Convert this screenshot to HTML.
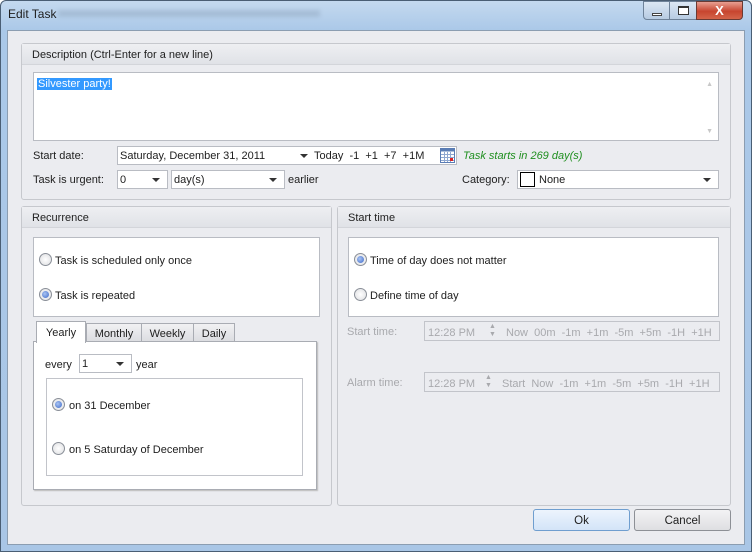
<!DOCTYPE html>
<html><head><meta charset="utf-8"><style>
*{box-sizing:border-box;margin:0;padding:0}
body{width:752px;height:552px;overflow:hidden;background:#fff;font-family:"Liberation Sans",sans-serif;font-size:11px;color:#1e1e1e;position:relative}
.a{position:absolute}
.win{left:0;top:0;width:752px;height:552px;background:linear-gradient(#c4d9ef,#aac8e8 30px,#a9c6e6);border:1px solid #4a5e74;border-radius:6px 6px 0 0}
.client{left:7px;top:30px;width:738px;height:515px;background:#ebecf0;border:1px solid #8b9db1}
.grp{border:1px solid #c6c8cd;border-radius:3px;background:#ebecf0}
.gh{position:absolute;left:0;top:0;right:0;height:21px;background:linear-gradient(#eeeff2,#e0e2e7);border-bottom:1px solid #d3d5da;padding:5px 0 0 10px}
.box{background:#fff;border:1px solid #b9bcc3}
.combo{background:#fff;border:1px solid #b9bcc3;padding:3px 0 0 2px}
.arr{position:absolute;right:7px;top:7px;width:0;height:0;border-left:4px solid transparent;border-right:4px solid transparent;border-top:4px solid #333}
.radio{position:absolute;width:13px;height:13px;border-radius:50%;border:1px solid #8a8f98;background:radial-gradient(#fff,#dcdde0)}
.radio.on::after{content:"";position:absolute;left:2px;top:2px;width:7px;height:7px;border-radius:50%;background:radial-gradient(circle at 40% 40%,#a9c4f3,#3c68c8)}
.dis{color:#a8a9ad}
.tab{position:absolute;top:323px;height:19px;border:1px solid #a9acb3;background:linear-gradient(#f1f1f3,#dcdde1);text-align:center;padding-top:4px}
.btn{border:1px solid #8d9096;border-radius:3px;text-align:center;padding-top:5px;font-size:11.5px}
</style></head><body>
<div class="a win"></div>
<div class="a" style="left:8px;top:7px;font-size:12px">Edit Task</div>
<div class="a" style="left:58px;top:10px;width:262px;height:7px;background:#8ea4bc;opacity:.45;filter:blur(2px)"></div>
<div class="a" style="left:643px;top:1px;width:27px;height:19px;border:1px solid #6e8299;border-radius:0 0 0 4px;background:linear-gradient(#dbe7f4,#b7cbe2)"><div class="a" style="left:8px;top:11px;width:10px;height:3px;border:1px solid #444;background:#fff"></div></div>
<div class="a" style="left:669px;top:1px;width:28px;height:19px;border:1px solid #6e8299;background:linear-gradient(#dbe7f4,#b7cbe2)"><div class="a" style="left:8px;top:4px;width:11px;height:9px;border:1px solid #333;border-top-width:2px;background:#fff"></div></div>
<div class="a" style="left:696px;top:1px;width:47px;height:19px;border:1px solid #6a3a33;border-radius:0 0 4px 0;background:linear-gradient(#e8a092,#c7452f 55%,#d4644a);color:#fff;font-weight:bold;font-size:13px;text-align:center;line-height:17px">X</div>
<div class="a client"></div>

<div class="a grp" style="left:21px;top:43px;width:710px;height:157px"><div class="gh">Description (Ctrl-Enter for a new line)</div></div>
<div class="a box" style="left:33px;top:72px;width:686px;height:69px"><span class="a" style="left:3px;top:5px;background:#3399ff;color:#fff;padding:0 1px">Silvester party!</span><span class="a" style="right:5px;top:8px;color:#c8c8c8;font-size:7px">▲</span><span class="a" style="right:5px;bottom:5px;color:#c8c8c8;font-size:7px">▼</span></div>
<div class="a" style="left:33px;top:150px">Start date:</div>
<div class="a combo" style="left:117px;top:146px;width:340px;height:19px">Saturday, December 31, 2011<div class="arr" style="left:182px;right:auto"></div>
<span class="a" style="left:196px;top:3px">Today&nbsp; -1&nbsp; +1&nbsp; +7&nbsp; +1M</span>
<svg class="a" style="left:322px;top:1px" width="15" height="15"><rect x=".5" y=".5" width="14" height="14" fill="#fff" stroke="#5a7db5"/><rect x=".5" y=".5" width="14" height="3" fill="#5a7db5"/><g stroke="#8fa8d0"><path d="M1 6.5h13M1 9.5h13M1 12.5h13M4.5 4v10M7.5 4v10M10.5 4v10"/></g><rect x="10" y="10" width="3" height="3" fill="#d22"/></svg></div>
<div class="a" style="left:463px;top:150px;color:#1f8f1f;font-style:italic">Task starts in 269 day(s)</div>
<div class="a" style="left:33px;top:174px">Task is urgent:</div>
<div class="a combo" style="left:117px;top:170px;width:51px;height:19px">0<div class="arr"></div></div>
<div class="a combo" style="left:171px;top:170px;width:114px;height:19px">day(s)<div class="arr"></div></div>
<div class="a" style="left:288px;top:174px">earlier</div>
<div class="a" style="left:462px;top:174px">Category:</div>
<div class="a combo" style="left:517px;top:170px;width:202px;height:19px"><div class="a" style="left:2px;top:1px;width:15px;height:15px;border:1px solid #000"></div><span class="a" style="left:21px;top:3px">None</span><div class="arr"></div></div>

<div class="a grp" style="left:21px;top:206px;width:311px;height:300px"><div class="gh">Recurrence</div></div>
<div class="a box" style="left:33px;top:237px;width:287px;height:80px"></div>
<div class="radio" style="left:39px;top:253px"></div><div class="a" style="left:55px;top:255px">Task is scheduled only once</div>
<div class="radio on" style="left:39px;top:288px"></div><div class="a" style="left:55px;top:290px">Task is repeated</div>
<div class="tab" style="left:86px;width:56px">Monthly</div>
<div class="tab" style="left:141px;width:53px">Weekly</div>
<div class="tab" style="left:193px;width:42px">Daily</div>
<div class="a box" style="left:33px;top:341px;width:284px;height:149px;border-color:#a9acb3;box-shadow:1px 1px 1px #bbb"></div>
<div class="a" style="left:36px;top:321px;width:50px;height:22px;background:#fff;border:1px solid #a9acb3;border-bottom:none;text-align:center;padding-top:5px">Yearly</div>
<div class="a" style="left:45px;top:359px">every</div>
<div class="a combo" style="left:79px;top:354px;width:53px;height:19px">1<div class="arr"></div></div>
<div class="a" style="left:136px;top:359px">year</div>
<div class="a box" style="left:46px;top:378px;width:257px;height:98px;border-color:#c2c4ca"></div>
<div class="radio on" style="left:52px;top:398px"></div><div class="a" style="left:69px;top:400px">on 31 December</div>
<div class="radio" style="left:52px;top:442px"></div><div class="a" style="left:69px;top:444px">on 5 Saturday of December</div>

<div class="a grp" style="left:337px;top:206px;width:394px;height:300px"><div class="gh">Start time</div></div>
<div class="a box" style="left:348px;top:237px;width:371px;height:80px"></div>
<div class="radio on" style="left:354px;top:253px"></div><div class="a" style="left:370px;top:255px">Time of day does not matter</div>
<div class="radio" style="left:354px;top:288px"></div><div class="a" style="left:370px;top:290px">Define time of day</div>
<div class="a dis" style="left:347px;top:326px">Start time:</div>
<div class="a dis" style="left:424px;top:321px;width:296px;height:20px;border:1px solid #c2c4ca;padding:5px 0 0 3px">12:28 PM<span class="a" style="left:64px;top:1px;font-size:7px;line-height:8px">▲<br>▼</span><span class="a" style="left:81px;top:5px">Now&nbsp; 00m&nbsp; -1m&nbsp; +1m&nbsp; -5m&nbsp; +5m&nbsp; -1H&nbsp; +1H</span></div>
<div class="a dis" style="left:347px;top:377px">Alarm time:</div>
<div class="a dis" style="left:424px;top:372px;width:296px;height:20px;border:1px solid #c2c4ca;padding:5px 0 0 3px">12:28 PM<span class="a" style="left:60px;top:1px;font-size:7px;line-height:8px">▲<br>▼</span><span class="a" style="left:77px;top:5px">Start&nbsp; Now&nbsp; -1m&nbsp; +1m&nbsp; -5m&nbsp; +5m&nbsp; -1H&nbsp; +1H</span></div>

<div class="a btn" style="left:533px;top:509px;width:97px;height:22px;border-color:#6f9ecf;background:linear-gradient(#edf4fd,#d3e4f8)">Ok</div>
<div class="a btn" style="left:634px;top:509px;width:97px;height:22px;background:linear-gradient(#f3f3f4,#dedfe2)">Cancel</div>
</body></html>
